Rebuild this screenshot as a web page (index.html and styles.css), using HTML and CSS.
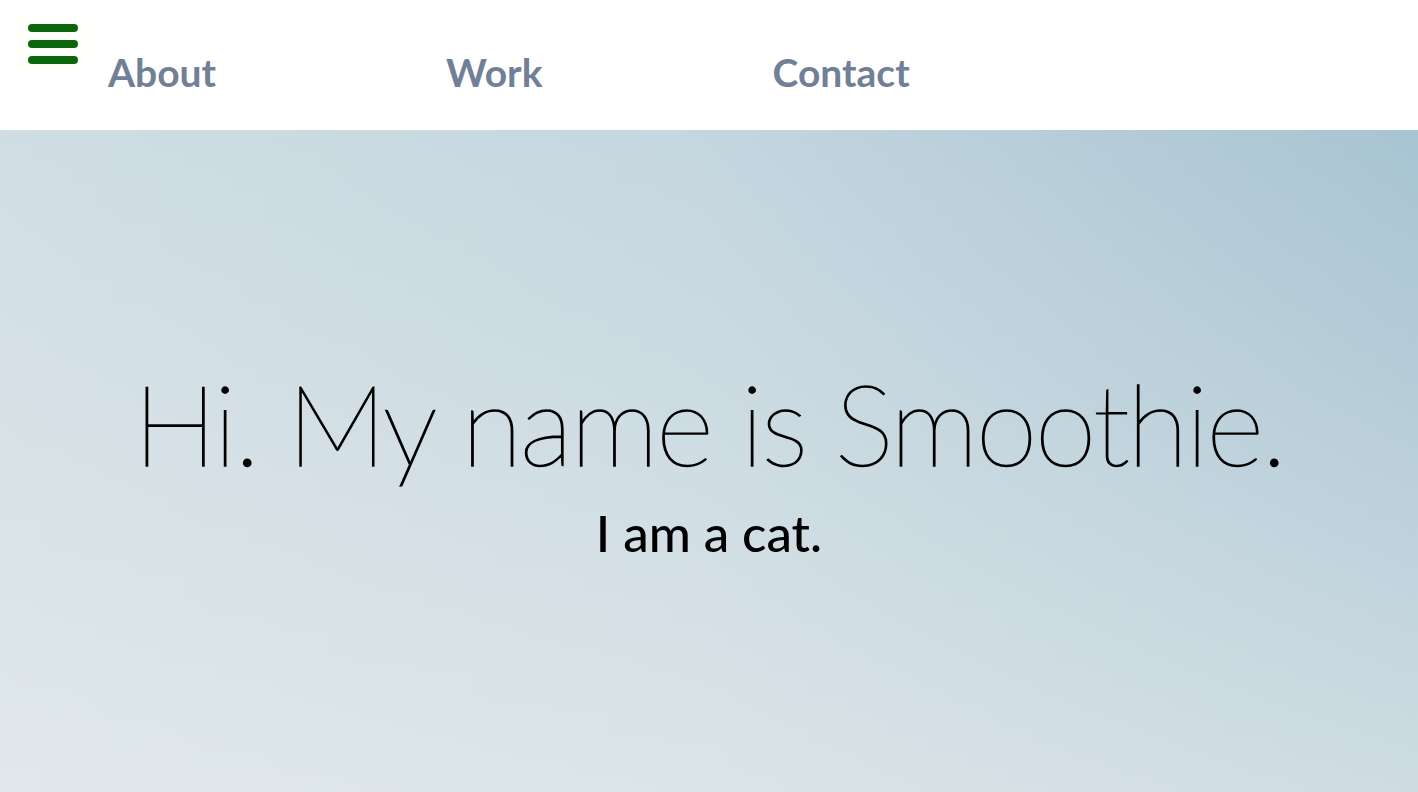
FILE: index.html
```html
<!DOCTYPE html>
<html lang="en">
<head>
<meta charset="utf-8">
<title>Smoothie</title>
<link rel="stylesheet" href="styles.css">
</head>
<body>
<header class="site-header">
  <button class="menu-btn" aria-label="Menu">
    <span class="bar"></span>
    <span class="bar"></span>
    <span class="bar"></span>
  </button>
  <nav class="nav">
    <a class="nav-link" href="#about">About</a>
    <a class="nav-link" href="#work">Work</a>
    <a class="nav-link" href="#contact">Contact</a>
  </nav>
</header>
<main class="hero">
  <h1 class="hero-title">Hi. My name is Smoothie.</h1>
  <p class="hero-sub">I am a cat.</p>
</main>
</body>
</html>
```

FILE: styles.css
```css
* { box-sizing: border-box; }
html, body { margin: 0; padding: 0; }
body {
  width: 1418px;
  height: 792px;
  overflow: hidden;
  font-family: "Lato", "Liberation Sans", sans-serif;
  background: #ffffff;
}
.site-header {
  height: 130px;
  background: #ffffff;
  display: flex;
  align-items: flex-start;
  padding: 14px 14px 0;
}
.menu-btn {
  width: 77px;
  height: 57px;
  padding: 10px 13px 7px 14px;
  border: 0;
  background: #fefefb;
  display: flex;
  flex-direction: column;
  justify-content: space-between;
  cursor: pointer;
}
.bar {
  display: block;
  width: 50px;
  height: 8px;
  border-radius: 4px;
  background: #0b650b;
}
.nav {
  display: flex;
  gap: 230px;
  margin-left: 17px;
  margin-top: 34px;
}
.nav-link {
  font-size: 39px;
  line-height: 48px;
  font-weight: 700;
  color: #718096;
  text-decoration: none;
}
.hero {
  height: 662px;
  background:
    linear-gradient(to bottom, rgba(238, 240, 240, 0) 0%, rgba(238, 240, 240, 0.2) 40%, rgba(238, 240, 240, 0.55) 100%),
    linear-gradient(to right, #d0dee4 0%, #c4d6df 50%, #a8c4d2 100%);
  display: flex;
  flex-direction: column;
  align-items: center;
  padding-top: 223px;
}
.hero-title {
  margin: 0;
  font-weight: 100;
  font-size: 112px;
  line-height: 140px;
  letter-spacing: -2.6px;
  color: #000;
  -webkit-text-stroke: 1.4px #000;
}
.hero-sub {
  margin: 10px 0 0;
  font-size: 51px;
  font-weight: 500;
  line-height: 60px;
  color: #000;
}
```
